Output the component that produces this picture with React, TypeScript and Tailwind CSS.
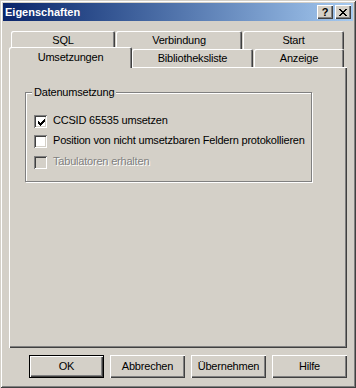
import React from "react";

const raised =
  "shadow-[inset_1px_1px_#ffffff,inset_-1px_-1px_#404040,inset_-2px_-2px_#808080]";

function Check({ checked, disabled }: { checked?: boolean; disabled?: boolean }) {
  const px: [number, number][] = [
    [6, 0],
    [5, 1], [6, 1],
    [0, 2], [4, 2], [5, 2], [6, 2],
    [0, 3], [1, 3], [3, 3], [4, 3], [5, 3],
    [0, 4], [1, 4], [2, 4], [3, 4], [4, 4],
    [1, 5], [2, 5], [3, 5],
    [2, 6],
  ];
  return (
    <div
      className={`w-[13px] h-[13px] shrink-0 flex items-center justify-center shadow-[inset_1px_1px_#808080,inset_-1px_-1px_#ffffff,inset_2px_2px_#404040,inset_-2px_-2px_#d4d0c8] ${
        disabled ? "bg-[#d4d0c8]" : "bg-white"
      }`}
    >
      {checked && (
        <svg width="7" height="7" viewBox="0 0 7 7" shapeRendering="crispEdges" className="ml-[1px] mt-[1px]">
          {px.map(([x, y]) => (
            <rect key={`${x}-${y}`} x={x} y={y} width="1" height="1" fill="#000" />
          ))}
        </svg>
      )}
    </div>
  );
}

function CloseGlyph() {
  const rows = ["11....11", ".11..11.", "..1111..", "...11...", "..1111..", ".11..11.", "11....11"];
  return (
    <svg width="8" height="7" viewBox="0 0 8 7" shapeRendering="crispEdges">
      {rows.flatMap((r, y) =>
        r.split("").map((c, x) =>
          c === "1" ? <rect key={`${x}-${y}`} x={x} y={y} width="1" height="1" fill="#000" /> : null
        )
      )}
    </svg>
  );
}

function Tab({ label, w, selected, className = "" }: { label: string; w: string; selected?: boolean; className?: string }) {
  return (
    <div
      className={`${w} ${selected ? "h-[21px] -mb-px relative z-10" : "h-full pt-[1px]"} bg-[#d4d0c8] rounded-t-[2px] flex items-center justify-center shadow-[inset_1px_1px_#ffffff,inset_-1px_0_#404040,inset_-2px_0_#808080] ${className}`}
    >
      <span className="leading-none">{label}</span>
    </div>
  );
}

function Btn({ label, def }: { label: string; def?: boolean }) {
  return (
    <div
      className={`w-[75px] h-[23px] flex items-center justify-center bg-[#d4d0c8] ${
        def
          ? "shadow-[inset_0_0_0_1px_#000000,inset_2px_2px_#ffffff,inset_-2px_-2px_#404040,inset_-3px_-3px_#808080]"
          : raised
      }`}
    >
      <span className="leading-none">{label}</span>
    </div>
  );
}

export default function App() {
  return (
    <div
      className="w-[356px] h-[388px] bg-[#d4d0c8] p-[3px] flex flex-col text-[11px] tracking-[-0.2px] text-black shadow-[inset_1px_1px_#d4d0c8,inset_-1px_-1px_#404040,inset_2px_2px_#ffffff,inset_-2px_-2px_#808080]"
      style={{ fontFamily: '"Liberation Sans", Arial, sans-serif' }}
    >
      {/* Title bar */}
      <div className="h-[18px] flex items-center bg-gradient-to-r from-[#0a246a] to-[#a6caf0] pl-[2px] pr-[2px]">
        <span className="flex-1 text-white font-bold text-[11px] tracking-normal leading-none">Eigenschaften</span>
        <div className="flex gap-[2px]">
          <div className={`w-[16px] h-[14px] bg-[#d4d0c8] flex items-center justify-center ${raised}`}>
            <span className="font-bold text-[11px] leading-none tracking-normal">?</span>
          </div>
          <div className={`w-[16px] h-[14px] bg-[#d4d0c8] flex items-center justify-center ${raised}`}>
            <CloseGlyph />
          </div>
        </div>
      </div>

      {/* Tabs */}
      <div className="ml-[6px] mt-[10px] flex flex-col">
        <div className="ml-[2px] h-[18px] flex gap-px">
          <Tab label="SQL" w="w-[104px]" />
          <Tab label="Verbindung" w="w-[126px]" />
          <Tab label="Start" w="w-[101px]" />
        </div>
        <div className="h-[18px] flex items-end">
          <Tab label="Umsetzungen" w="w-[123px]" selected />
          <Tab label="Bibliotheksliste" w="w-[121px]" />
          <Tab label="Anzeige" w="w-[90px]" className="ml-px" />
        </div>
        <div className="w-[338px] h-[281px] bg-[#d4d0c8] pl-[16px] pt-[25px] shadow-[inset_1px_1px_#ffffff,inset_-1px_-1px_#404040,inset_-2px_-2px_#808080]">
          <div className="relative w-[287px] h-[90px] border border-[#808080] shadow-[inset_1px_1px_#ffffff,1px_1px_#ffffff] pl-[8px] pt-[22px] flex flex-col">
            <span className="absolute left-[6px] top-[-7px] bg-[#d4d0c8] px-[2px] leading-[13px]">Datenumsetzung</span>
            <div className="flex items-center h-[13px] gap-[6px]">
              <Check checked />
              <span className="leading-none -mt-[2px]">CCSID 65535 umsetzen</span>
            </div>
            <div className="flex items-center h-[13px] gap-[6px] mt-[7px]">
              <Check />
              <span className="leading-none -mt-[2px]">Position von nicht umsetzbaren Feldern protokollieren</span>
            </div>
            <div className="flex items-center h-[13px] gap-[6px] mt-[8px]">
              <Check disabled />
              <span className="leading-none -mt-[2px] text-[#808080] [text-shadow:1px_1px_0_#ffffff]">Tabulatoren erhalten</span>
            </div>
          </div>
        </div>
      </div>

      {/* Buttons */}
      <div className="ml-[26px] mt-[7px] flex gap-[6px]">
        <Btn label="OK" def />
        <Btn label="Abbrechen" />
        <Btn label="Übernehmen" />
        <Btn label="Hilfe" />
      </div>
    </div>
  );
}
